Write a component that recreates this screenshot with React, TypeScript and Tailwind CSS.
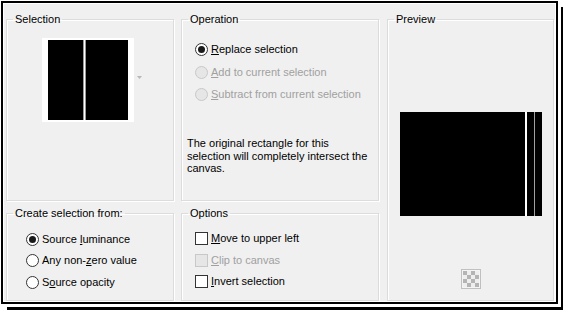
import type { ReactNode } from "react";

const font = { fontFamily: '"Segoe UI", "Liberation Sans", Arial, sans-serif' };

interface RadioProps {
  checked?: boolean;
  disabled?: boolean;
  children: ReactNode;
}

const Radio = ({ checked, disabled, children }: RadioProps) => {
  return (
    <div className="flex h-[15px] items-center">
      <span
        className={
          disabled
            ? "flex h-[13px] w-[13px] items-center justify-center rounded-full border border-[#c8c8c8] bg-[#e6e6e6]"
            : "flex h-[13px] w-[13px] items-center justify-center rounded-full border border-[#333333] bg-white"
        }
      >
        {checked && <span className="h-[7px] w-[7px] rounded-full bg-[#1a1a1a]" />}
      </span>
      <span className={disabled ? "ml-[3px] text-[#a0a0a0]" : "ml-[3px] text-black"}>{children}</span>
    </div>
  );
};

interface CheckProps {
  disabled?: boolean;
  children: ReactNode;
}

const Check = ({ disabled, children }: CheckProps) => {
  return (
    <div className="flex h-[15px] items-center">
      <span
        className={
          disabled
            ? "h-[13px] w-[13px] border border-[#c8c8c8] bg-[#e6e6e6]"
            : "h-[13px] w-[13px] border border-[#333333] bg-white"
        }
      />
      <span className={disabled ? "ml-[3px] text-[#a0a0a0]" : "ml-[3px] text-black"}>{children}</span>
    </div>
  );
};

interface GroupProps {
  title: string;
  className: string;
  children?: ReactNode;
}

const Group = ({ title, className, children }: GroupProps) => {
  return (
    <fieldset
      className={`border border-[#dcdcdc] shadow-[inset_1px_1px_0_#ffffff,1px_1px_0_#ffffff] ${className}`}
    >
      <legend className="ml-[6px] px-[2px] leading-[14px]">{title}</legend>
      {children}
    </fieldset>
  );
};

const Checker = () => {
  const cells = Array.from({ length: 16 }, (_, i) => {
    const r = Math.floor(i / 4);
    const c = i % 4;
    return (r + c) % 2 === 0;
  });
  return (
    <div className="flex h-[20px] w-[20px] items-center justify-center border border-[#c0c0c0] bg-[#f4f4f4]">
      <div className="grid h-[16px] w-[16px] grid-cols-4">
        {cells.map((dark, i) => (
          <span key={i} className={dark ? "bg-[#b4b4b4]" : "bg-[#eeeeee]"} />
        ))}
      </div>
    </div>
  );
};

export default function App() {
  return (
    <div className="h-[310px] w-[563px] bg-white pl-px pt-px text-[11px] text-black" style={font}>
      <div className="h-[303px] w-[557px] border-2 border-black bg-white p-px shadow-[3px_3px_0_0_#ffffff,6px_6px_0_0_#000000]">
        <div className="flex h-full bg-[#f0f0f0] pl-[2px] pt-[8px]">
          {/* left column */}
          <div className="flex w-[168px] flex-col">
            <Group title="Selection" className="h-[189px]">
              <div className="ml-[35px] mt-[12px] flex items-center">
                <div className="flex h-[84px] w-[92px] bg-white px-[6px] py-[2px]">
                  <div className="h-full w-[35px] bg-black" />
                  <div className="h-full w-[3px] border-x border-[#9a9a9a] bg-white" />
                  <div className="h-full flex-1 bg-black" />
                </div>
                <svg width="5" height="3" viewBox="0 0 5 3" className="ml-[3px] mt-[-6px]">
                  <path d="M0 0h5L2.5 3z" fill="#b8b8b8" />
                </svg>
              </div>
            </Group>
            <Group title="Create selection from:" className="mt-[5px] h-[95px]">
              <div className="ml-[19px] mt-[12px]">
                <Radio checked>
                  Source <u>l</u>uminance
                </Radio>
                <div className="mt-[6px]">
                  <Radio>
                    Any non-<u>z</u>ero value
                  </Radio>
                </div>
                <div className="mt-[7px]">
                  <Radio>
                    S<u>o</u>urce opacity
                  </Radio>
                </div>
              </div>
            </Group>
          </div>

          {/* middle column */}
          <div className="ml-[7px] flex w-[198px] flex-col">
            <Group title="Operation" className="h-[189px]">
              <div className="ml-[13px] mt-[16px]">
                <Radio checked>
                  <u>R</u>eplace selection
                </Radio>
                <div className="mt-[8px]">
                  <Radio disabled>
                    <u>A</u>dd to current selection
                  </Radio>
                </div>
                <div className="mt-[7px]">
                  <Radio disabled>
                    <u>S</u>ubtract from current selection
                  </Radio>
                </div>
              </div>
              <p className="ml-[5px] mt-[35px] whitespace-nowrap leading-[12.5px]">
                The original rectangle for this
                <br />
                selection will completely intersect the
                <br />
                canvas.
              </p>
            </Group>
            <Group title="Options" className="mt-[5px] h-[95px]">
              <div className="ml-[13px] mt-[11px]">
                <Check>
                  <u>M</u>ove to upper left
                </Check>
                <div className="mt-[7px]">
                  <Check disabled>
                    <u>C</u>lip to canvas
                  </Check>
                </div>
                <div className="mt-[6px]">
                  <Check>
                    <u>I</u>nvert selection
                  </Check>
                </div>
              </div>
            </Group>
          </div>

          {/* right column */}
          <div className="ml-[8px] w-[167px]">
            <Group title="Preview" className="h-[289px]">
              <div className="ml-[12px] mt-[86px] flex h-[104px] w-[142px]">
                <div className="h-full w-[125px] bg-black" />
                <div className="h-full w-[2px] bg-white" />
                <div className="h-full w-[7px] bg-black" />
                <div className="h-full w-px bg-[#a0a0a0]" />
                <div className="h-full flex-1 bg-black" />
              </div>
              <div className="ml-[73px] mt-[53px]">
                <Checker />
              </div>
            </Group>
          </div>
        </div>
      </div>
    </div>
  );
}
